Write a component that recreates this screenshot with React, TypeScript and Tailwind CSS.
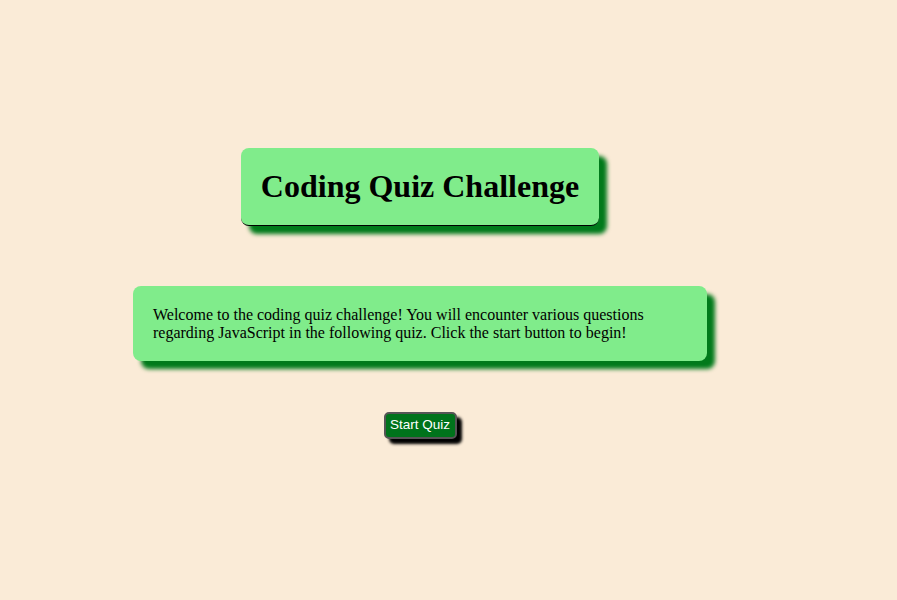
export default function App() {
  return (
    <div className="min-h-[600px] w-full bg-[#faebd7]" style={{ fontFamily: '"Liberation Serif", "Times New Roman", serif' }}>
      <div className="flex w-[840px] flex-col items-center pt-[148px]">
        <div className="rounded-[8px] border-b border-black bg-[#80ec8b] px-[20px] py-[20px] shadow-[8px_8px_4px_#017a1b]">
          <h1 className="text-[32px] font-bold leading-[37px] text-black">Coding Quiz Challenge</h1>
        </div>
        <div className="mt-[60px] w-[574px] rounded-[8px] bg-[#80ec8b] px-[20px] pt-[20px] pb-[19px] shadow-[8px_8px_4px_#017a1b]">
          <p className="text-[16px] leading-[18px] text-black">
            Welcome to the coding quiz challenge! You will encounter various questions regarding JavaScript in the following quiz. Click the start button to begin!
          </p>
        </div>
        <button
          className="mt-[51px] h-[27px] w-[73px] rounded-[5px] border-2 border-[#555555] bg-[#00731b] text-[13.5px] text-white shadow-[5px_5px_3px_#000]"
          style={{ fontFamily: '"Liberation Sans", Arial, sans-serif' }}
        >
          Start Quiz
        </button>
      </div>
    </div>
  );
}
